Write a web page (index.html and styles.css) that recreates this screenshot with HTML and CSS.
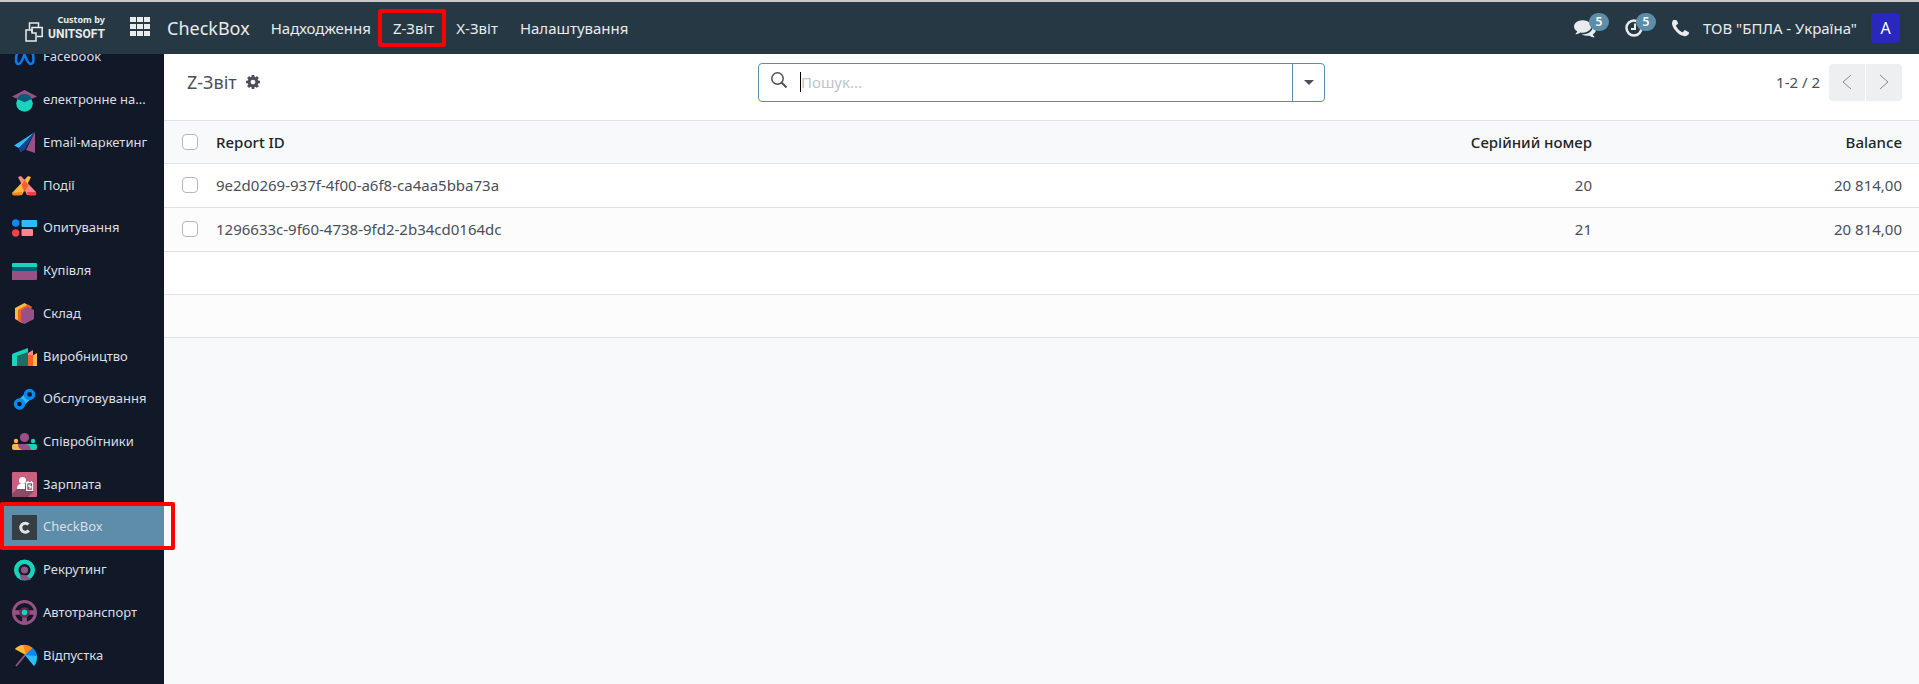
FILE: index.html
```
<!DOCTYPE html>
<html lang="uk">
<head>
  <meta charset="UTF-8">
  <meta name="viewport" content="width=device-width, initial-scale=1.0">
  <title>Z-Звіт</title>
  <link rel="stylesheet" href="styles.css">
</head>
<body>
  <header class="navbar">
    <a href="#" class="brand">
      <svg class="brand-icon" viewBox="0 0 18 20" fill="none" stroke="currentColor" stroke-width="1.500">
        <path d="M4.500 7.500V1h9v4"></path>
        <path d="M7 10V5.500h10.200v9H12"></path>
        <path d="M1 8h6v3h4v8H1z"></path>
      </svg>
      <span class="brand-text">
        <span class="brand-top">Custom by</span>
        <span class="brand-name">UNITSOFT</span>
      </span>
    </a>
    <button class="apps-toggle" aria-label="Додатки">
      <svg viewBox="0 0 20 19" fill="currentColor">
        <path d="M0 0h6v5H0zM7 0h6v5H7zM14 0h6v5h-6zM0 7h6v5H0zM7 7h6v5H7zM14 7h6v5h-6zM0 14h6v5H0zM7 14h6v5H7zM14 14h6v5h-6z"></path>
      </svg>
    </button>
    <a href="#" class="app-name">CheckBox</a>
    <nav class="menu">
      <a href="#">Надходження</a>
      <a href="#" class="marked">Z-Звіт</a>
      <a href="#">X-Звіт</a>
      <a href="#">Налаштування</a>
    </nav>
    <div class="systray">
      <button class="tray-btn" aria-label="Повідомлення">
        <svg class="tray-icon icon-chat" viewBox="0 0 1792 1792" fill="currentColor"><path d="M1408 768q0 139-94 257t-256.500 186.500-353.500 68.500q-86 0-176-16-124 88-278 128-36 9-86 16h-3q-11 0-20.500-8t-11.500-21q-1-3-1-6.500t.5-6.500 2-6l2.500-5 3.500-5.500 4-5 4.500-5 4-4.500q5-6 23-25t26-29.500 22.500-29 25-38.500 20.500-44q-124-72-195-177t-71-224q0-139 94-257t256.500-186.500 353.500-68.500 353.500 68.500 256.500 186.500 94 257zm384 256q0 120-71 224.500t-195 176.500q10 24 20.500 44t25 38.500 22.500 29 26 29.500 23 25q1 1 4 4.500t4.500 5 4 5 3.500 5.500l2.500 5 2 6 .5 6.500-1 6.500q-3 14-13 22t-22 7q-50-7-86-16-154-40-278-128-90 16-176 16-271 0-472-132 58 4 88 4 161 0 309-45t264-129q125-92 192-212t67-254q0-77-23-152 129 71 204 178t75 230z"></path></svg>
        <span class="badge">5</span>
      </button>
      <button class="tray-btn" aria-label="Дії">
        <svg class="tray-icon" viewBox="0 0 18 18" fill="none" stroke="currentColor" stroke-width="2.500"><circle cx="9" cy="9" r="7.500"></circle><path d="M10 4.500v5.500H6" stroke-width="2"></path></svg>
        <span class="badge">5</span>
      </button>
      <button class="tray-btn" aria-label="Телефон">
        <svg class="tray-icon icon-phone" viewBox="192 192 1408 1408" fill="currentColor"><path d="M1600 1240q0 27-10 70.500t-21 68.500q-21 50-122 106-94 51-186 51-27 0-53-3.500t-57.500-12.500-47-14.500-55.500-20.500-49-18q-98-35-175-83-127-79-264-216t-216-264q-48-77-83-175-3-9-18-49t-20.500-55.500-14.500-47-12.500-57.500-3.500-53q0-92 51-186 56-101 106-122 25-11 68.500-21t70.500-10q14 0 21 3 18 6 53 76 11 19 30 54t35 63.500 31 53.500q3 4 17.500 25t21.500 35.500 7 28.500q0 20-28.500 50t-62 55-62 53-28.500 46q0 9 5 22.500t8.500 20.500 14 24 11.500 19q76 137 174 235t235 174q2 1 19 11.500t24 14 20.500 8.500 22.500 5q18 0 46-28.500t53-62 55-62 50-28.500q14 0 28.500 7t35.500 21.500 25 17.500q25 15 53.500 31t63.500 35 54 30q70 35 76 53 3 7 3 21z"></path></svg>
      </button>
      <button class="company">ТОВ "БПЛА - Україна"</button>
      <button class="avatar">A</button>
    </div>
  </header>

  <div class="layout">
    <aside class="sidebar">
      <ul class="app-list">
        <li><a href="#">
          <svg viewBox="0 0 25 25" fill="none" stroke="#0a7cf0" stroke-width="2.500"><path d="M4 15C4 9 6 5 8.500 5c4 0 6 14 10 14 2 0 3-2 3-5 0-5-2-9-5-9C12 5 11 19 6.500 19 5 19 4 17.500 4 15z"></path></svg>
          <span>Facebook</span></a></li>
        <li><a href="#">
          <svg viewBox="0 0 25 25"><circle cx="12.500" cy="15.500" r="8.300" fill="#1ad3bb"></circle><path d="M12.500 2L25 8.500 12.500 14 0 8.500z" fill="#985184"></path><path d="M5 10.800a8.300 8.300 0 0 1 15 0l-7.500 3.500z" fill="#005e7a"></path></svg>
          <span>електронне на...</span></a></li>
        <li><a href="#">
          <svg viewBox="0 0 25 25"><path d="M23 2L2 15.500l5 2.500z" fill="#2ebcfa"></path><path d="M23 2L7 18l1 4.500 5-3z" fill="#144496"></path><path d="M23 2v21l-9-3z" fill="#985184"></path></svg>
          <span>Email-маркетинг</span></a></li>
        <li><a href="#">
          <svg viewBox="0 0 25 25"><path d="M6 4l3-1 15 16-1 3h-8z" fill="#fc868b"></path><path d="M19 4l-3-1L0 20l2 2h8z" fill="#fbb945"></path><path d="M12.500 7l4 5-4 7-3-7z" fill="#f86126"></path><path d="M0 20l10-1v2l-2 1.500H2q-2 0-2-2.500z" fill="#f78613"></path><path d="M15 19l9 0q1 3-1 3.500h-6q-2-1-2-3.500z" fill="#fc3d4c"></path></svg>
          <span>Події</span></a></li>
        <li><a href="#">
          <svg viewBox="0 0 25 25"><circle cx="3.700" cy="7" r="3.700" fill="#088bf5"></circle><circle cx="3.700" cy="17" r="3.700" fill="#fc3d4c"></circle><rect x="9.500" y="4" width="15.500" height="7" rx="1" fill="#2ebcfa"></rect><rect x="9.500" y="13" width="11.500" height="7" rx="1" fill="#fc868b"></rect></svg>
          <span>Опитування</span></a></li>
        <li><a href="#">
          <svg viewBox="0 0 25 25"><path d="M0 5q0-1 1-1h23q1 0 1 1v4H0z" fill="#1ad3bb"></path><path d="M0 8h25v4H0z" fill="#005e7a"></path><path d="M0 12h25v8q0 1-1 1H0z" fill="#985184"></path></svg>
          <span>Купівля</span></a></li>
        <li><a href="#">
          <svg viewBox="0 0 25 25"><path d="M12.500 2L3 7v11l7 4 9-16z" fill="#fbb945"></path><path d="M16 3.500L6 9v11l5 2.500L20 6z" fill="#f86126"></path><path d="M15.500 5.500l6.500 3.500v9l-9.500 5-3.500-2V9.500z" fill="#985184"></path></svg>
          <span>Склад</span></a></li>
        <li><a href="#">
          <svg viewBox="0 0 25 25"><path d="M0 11q0-1 1-1.500L16 4v6L5 22H0z" fill="#1ad3bb"></path><path d="M16 9l5-3v9h-5z" fill="#fc868b"></path><path d="M25 9v13h-5V12z" fill="#fbb945"></path><path d="M16 11h5v11h-5z" fill="#f86126"></path><path d="M5 12l11-4v14H5z" fill="#1a6f65"></path></svg>
          <span>Виробництво</span></a></li>
        <li><a href="#">
          <svg viewBox="0 0 25 25" fill="none"><path d="M8 17l9-9" stroke="#2ebcfa" stroke-width="8"></path><circle cx="17.500" cy="7.500" r="4" stroke="#088bf5" stroke-width="3.500"></circle><circle cx="7.500" cy="17" r="4" stroke="#088bf5" stroke-width="3.500"></circle><circle cx="17.500" cy="7.500" r="2.300" fill="#111827"></circle><circle cx="7.500" cy="17" r="2.300" fill="#111827"></circle></svg>
          <span>Обслуговування</span></a></li>
        <li><a href="#">
          <svg viewBox="0 0 25 25"><circle cx="12.500" cy="8.500" r="4.600" fill="#985184"></circle><circle cx="4" cy="12" r="2.200" fill="#fbb945"></circle><circle cx="21" cy="12" r="2.200" fill="#1ad3bb"></circle><path d="M0 17q0-2 2-2h9l5 6H2q-2 0-2-2z" fill="#fbb945"></path><path d="M12 15h11q2 0 2 2v2q0 2-2 2h-8z" fill="#1ad3bb"></path><path d="M6 15h7q5 0 6 6h-7q-6 0-6-6z" fill="#985184"></path></svg>
          <span>Співробітники</span></a></li>
        <li><a href="#">
          <svg viewBox="0 0 25 25"><rect width="25" height="25" rx="1" fill="#c9607f"></rect><path d="M5 17L0 22v3h16l6-6V9z" fill="#8e4a63"></path><circle cx="10.500" cy="8.500" r="3.500" fill="#fff"></circle><path d="M5 17q0-5 4-5h4v5z" fill="#fff"></path><path d="M14.700 10.700h6v7.600h-6zM16 9v2M19.500 9v2M19 13h-2v1.500h2V16h-2" fill="none" stroke="#fff" stroke-width="1.200"></path></svg>
          <span>Зарплата</span></a></li>
        <li class="active"><a href="#">
          <svg viewBox="0 0 25 25"><rect width="25" height="25" fill="#363e45"></rect><path d="M16.500 9.500a4.500 4.500 0 1 0 .3 6" fill="none" stroke="#e4e4e4" stroke-width="3"></path></svg>
          <span>CheckBox</span></a></li>
        <li><a href="#">
          <svg viewBox="0 0 25 25"><circle cx="12.500" cy="12" r="8.300" fill="none" stroke="#1ad3bb" stroke-width="4.500"></circle><circle cx="12.500" cy="12" r="3.600" fill="#985184"></circle><path d="M8 17q7-1 11 5H10q-2-1-2-5z" fill="#985184"></path></svg>
          <span>Рекрутинг</span></a></li>
        <li><a href="#">
          <svg viewBox="0 0 25 25" fill="none" stroke="#985184"><circle cx="12.500" cy="12.500" r="11" stroke-width="3"></circle><path d="M2 12.500h7M16 12.500h7M12.500 16v7" stroke-width="4.500"></path><circle cx="12.500" cy="12.500" r="4" fill="#1ad3bb" stroke="#6b2a56" stroke-width="2.500"></circle></svg>
          <span>Автотранспорт</span></a></li>
        <li><a href="#">
          <svg viewBox="0 0 25 25"><path d="M14 11L4 23" stroke="#985184" stroke-width="1.800"></path><path d="M3 6q9-8 18-1l-7 7z" fill="#f78613"></path><path d="M3 6q4-4 8-4l3 10z" fill="#fbb945"></path><path d="M21 5q8 8 1 18l-9-11z" fill="#088bf5"></path><path d="M25 13q0 6-3 10l-9-11z" fill="#2ebcfa"></path></svg>
          <span>Відпустка</span></a></li>
      </ul>
      <span class="active-frame"></span>
    </aside>

    <main class="content">
      <div class="control-panel">
        <div class="breadcrumb">
          <h1>Z-Звіт</h1>
          <button class="gear" aria-label="Дії">
            <svg viewBox="128 128 1536 1536" fill="currentColor"><path d="M1152 896q0-106-75-181t-181-75-181 75-75 181 75 181 181 75 181-75 75-181zm512-109v222q0 12-8 23t-20 13l-185 28q-19 54-39 91 35 50 107 138 10 12 10 25t-9 23q-27 37-99 108t-94 71q-12 0-26-9l-138-108q-44 23-91 38-16 136-29 186-7 28-36 28h-222q-14 0-24.500-8.500t-11.500-21.500l-28-184q-49-16-90-37l-141 107q-10 9-25 9-14 0-25-11-126-114-165-168-7-10-7-23 0-12 8-23 15-21 51-66.500t54-70.500q-27-50-41-99l-183-27q-13-2-21-12.500t-8-23.500v-222q0-12 8-23t19-13l186-28q14-46 39-92-40-57-107-138-10-12-10-24 0-10 9-23 26-36 98.500-107.500t94.500-71.500q13 0 26 10l138 107q44-23 91-38 16-136 29-186 7-28 36-28h222q14 0 24.500 8.500t11.500 21.500l28 184q49 16 90 37l142-107q9-9 24-9 13 0 25 10 129 119 165 170 7 8 7 22 0 12-8 23-15 21-51 66.500t-54 70.500q26 50 41 98l183 28q13 2 21 12.500t8 23.500z"></path></svg>
          </button>
        </div>
        <div class="search">
          <svg class="search-icon" viewBox="0 0 16 16" fill="none" stroke="currentColor" stroke-width="1.500"><circle cx="6.500" cy="6.500" r="5.700"></circle><path d="M10.500 10.500l5 5" stroke-width="2"></path></svg>
          <span class="caret"></span>
          <input type="text" placeholder="Пошук..." aria-label="Пошук">
          <button class="search-toggle" aria-label="Фільтри"></button>
        </div>
        <div class="pager">
          <span class="pager-value">1-2 / 2</span>
          <div class="pager-buttons">
            <button aria-label="Попередня"><svg viewBox="0 0 10 16"><path d="M9 1L1 8l8 7"></path></svg></button>
            <button aria-label="Наступна"><svg viewBox="0 0 10 16"><path d="M1 1l8 7-8 7"></path></svg></button>
          </div>
        </div>
      </div>

      <table class="list">
        <thead>
          <tr>
            <th class="col-check"><input type="checkbox" aria-label="Вибрати все"></th>
            <th>Report ID</th>
            <th class="col-serial">Серійний номер</th>
            <th class="col-balance">Balance</th>
          </tr>
        </thead>
        <tbody>
          <tr>
            <td class="col-check"><input type="checkbox" aria-label="Вибрати звіт 20"></td>
            <td>9e2d0269-937f-4f00-a6f8-ca4aa5bba73a</td>
            <td class="col-serial">20</td>
            <td class="col-balance">20 814,00</td>
          </tr>
          <tr>
            <td class="col-check"><input type="checkbox" aria-label="Вибрати звіт 21"></td>
            <td>1296633c-9f60-4738-9fd2-2b34cd0164dc</td>
            <td class="col-serial">21</td>
            <td class="col-balance">20 814,00</td>
          </tr>
          <tr class="empty"><td colspan="4"></td></tr>
          <tr class="empty"><td colspan="4"></td></tr>
        </tbody>
      </table>
    </main>
  </div>
</body>
</html>
```
FILE: styles.css
```
:root {
  --navbar: #263844;
  --sidebar: #111827;
  --accent: #5d8da8;
  --text: #4a4f59;
  --heading: #212529;
  --border: #dee2e6;
  --surface: #f8f9fb;
  --mark: #ff0000;
}

* {
  margin: 0;
  padding: 0;
  box-sizing: border-box;
}

body {
  font-family: "Noto Sans", "Open Sans", sans-serif;
  font-size: 15px;
  line-height: 20px;
  color: var(--text);
  background-color: var(--surface);
  height: 100vh;
  display: flex;
  flex-direction: column;
  overflow: hidden;
}

button {
  font: inherit;
  color: inherit;
  background: none;
  border: none;
  cursor: pointer;
}

a {
  color: inherit;
  text-decoration: none;
}

svg {
  display: block;
}

/* navbar */
.navbar {
  flex: none;
  height: 54px;
  border-top: 2px solid #cacaca;
  background-color: var(--navbar);
  color: #e9ebec;
  display: flex;
  align-items: center;
  padding: 0 19px 0 25px;
}

.brand {
  display: flex;
  align-items: flex-end;
  gap: 5px;
  width: 105px;
}

.brand-icon {
  width: 18px;
  height: 20px;
}

.brand-text {
  display: flex;
  flex-direction: column;
  align-items: flex-end;
  font-weight: 700;
}

.brand-top {
  font-size: 9px;
  line-height: 12px;
}

.brand-name {
  font-family: Roboto, sans-serif;
  font-size: 12px;
  line-height: 16px;
}

.apps-toggle svg {
  width: 20px;
  height: 19px;
  margin-bottom: 3px;
}

.app-name {
  font-size: 18px;
  margin: 0 10px 0 17px;
}

.menu {
  display: flex;
}

.menu a {
  padding: 9px 11px;
}

.menu .marked {
  position: relative;
}

.menu .marked::after {
  content: '';
  position: absolute;
  inset: 0 -1px 0 -4px;
  border: 4px solid var(--mark);
  border-radius: 3px;
}

.systray {
  margin-left: auto;
  display: flex;
  align-items: center;
}

.tray-btn {
  position: relative;
  height: 22px;
  display: flex;
  align-items: center;
  margin-right: 29px;
}

.tray-icon {
  width: 18px;
  height: 18px;
}

.icon-chat {
  width: 22px;
  height: 22px;
}

.icon-phone {
  width: 17px;
  height: 17px;
}

.tray-btn:nth-child(3) {
  margin-right: 14px;
}

.badge {
  position: absolute;
  top: -4px;
  right: -13px;
  width: 20px;
  height: 18px;
  border-radius: 9px;
  background-color: var(--accent);
  color: #fff;
  font-size: 12px;
  font-weight: 600;
  line-height: 18px;
}

.avatar {
  width: 29px;
  height: 30px;
  margin-left: 14px;
  border-radius: 4px;
  background-color: #2a26c0;
  color: #fff;
  font-size: 16px;
}

/* layout */
.layout {
  flex: 1;
  min-height: 0;
  display: flex;
}

.sidebar {
  position: relative;
  flex: none;
  width: 164px;
  background-color: var(--sidebar);
  color: #dcdfe4;
}

/* scrolled down a little, the first item goes under the navbar */
.app-list {
  position: absolute;
  inset: -18px 0 7px;
  clip-path: inset(18px 0 0);
  list-style: none;
  display: flex;
  flex-direction: column;
}

.app-list li {
  flex: 1;
  display: flex;
}

.app-list a {
  flex: 1;
  min-width: 0;
  display: flex;
  align-items: center;
  gap: 6px;
  padding: 0 8px 0 12px;
  font-size: 13px;
}

.app-list svg {
  flex: none;
  width: 25px;
  height: 25px;
}

.app-list span {
  padding-bottom: 2px;
  white-space: nowrap;
}

.app-list .active {
  background-color: var(--accent);
}

.active-frame {
  position: absolute;
  top: 448px;
  left: 0;
  width: 175px;
  height: 48px;
  border: 4px solid var(--mark);
  border-radius: 2px;
}

.content {
  flex: 1;
  min-width: 0;
}

/* control panel */
.control-panel {
  height: 67px;
  padding: 0 17px 10px;
  background-color: #fff;
  border-bottom: 1px solid var(--border);
  display: grid;
  grid-template-columns: 1fr 567px 1fr;
  align-items: center;
}

.breadcrumb {
  display: flex;
  align-items: center;
  gap: 9px;
  padding-left: 6px;
}

.breadcrumb h1 {
  font-size: 18px;
  font-weight: 400;
}

.gear svg {
  width: 14px;
  height: 14px;
}

.search {
  display: flex;
  align-items: center;
  height: 39px;
  border: 1px solid var(--accent);
  border-radius: 4px;
}

.search-icon {
  width: 16px;
  height: 16px;
  margin: 0 13px 4px 12px;
}

.caret {
  width: 1px;
  height: 20px;
  background-color: #000;
}

.search input {
  flex: 1;
  min-width: 0;
  border: none;
  outline: none;
  background: none;
  font: inherit;
  color: var(--text);
}

.search input::placeholder {
  color: #bfc3ca;
}

.search-toggle {
  display: flex;
  align-items: center;
  justify-content: center;
  align-self: stretch;
  width: 32px;
  border-left: 1px solid var(--accent);
}

.search-toggle::before {
  content: '';
  border: 5px solid transparent;
  border-top-color: var(--text);
  border-bottom: none;
}

.pager {
  display: flex;
  align-items: center;
  justify-content: flex-end;
  gap: 9px;
}

.pager-buttons {
  display: flex;
  gap: 1px;
}

.pager-buttons button {
  width: 36px;
  height: 37px;
  background-color: #eeeff1;
  display: flex;
  align-items: center;
  justify-content: center;
}

.pager-buttons button:first-child {
  border-radius: 4px 0 0 4px;
}

.pager-buttons button:last-child {
  border-radius: 0 4px 4px 0;
}

.pager-buttons svg {
  width: 10px;
  height: 16px;
  fill: none;
  stroke: #85888e;
}

/* list */
.list {
  width: 100%;
  border-collapse: separate;
  border-spacing: 0;
  background-color: #fff;
}

.list th,
.list td {
  height: 44px;
  padding-bottom: 2px;
  border-bottom: 1px solid var(--border);
  text-align: left;
  vertical-align: middle;
}

.list th {
  height: 43px;
  padding-bottom: 0;
  background-color: var(--surface);
  color: var(--heading);
  font-weight: 500;
}

.list .empty td {
  height: 43px;
}

.list tbody tr:nth-child(even) {
  background-color: #fcfcfc;
}

.list .col-check {
  width: 52px;
  padding-left: 18px;
}

.list .col-serial {
  text-align: right;
}

.list .col-balance {
  width: 327px;
  padding-right: 17px;
  text-align: right;
}

.list input {
  appearance: none;
  display: block;
  width: 16px;
  height: 16px;
  border: 1px solid #b5b7ba;
  border-radius: 4px;
  background-color: #fff;
}
```
